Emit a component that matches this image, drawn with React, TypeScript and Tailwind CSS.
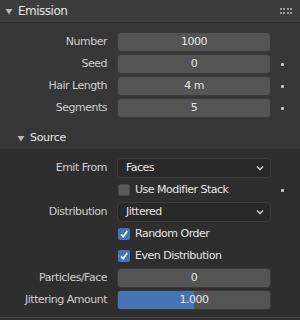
import { ReactNode } from 'react';

const font = { fontFamily: '"DejaVu Sans", "Liberation Sans", sans-serif' };

function Dot() {
  return (
    <div className="w-[22px] flex justify-center">
      <div className="w-[3px] h-[3px] bg-[#c8c8c8] rounded-[1px]" />
    </div>
  );
}

function Row({ label, children, dot }: { label?: string; children: ReactNode; dot?: boolean }) {
  return (
    <div className="flex items-center h-[20px]">
      <div className="w-[107px] text-right text-[11px] tracking-[-0.5px] text-[#d0d0d0] whitespace-nowrap">{label}</div>
      <div className="ml-[10px] w-[154px] h-full">{children}</div>
      {dot ? <Dot /> : <div className="w-[22px]" />}
    </div>
  );
}

function NumField({ value }: { value: string }) {
  return (
    <div className="h-full rounded-[4px] bg-[#545454] border border-[#3a3a3a] flex items-center justify-center text-[11px] tracking-[-0.5px] text-[#e6e6e6]">
      {value}
    </div>
  );
}

function Dropdown({ value }: { value: string }) {
  return (
    <div className="h-full rounded-[4px] bg-[#282828] border border-[#3d3d3d] flex items-center justify-between pl-[8px] pr-[6px] text-[11px] tracking-[-0.5px] text-[#e6e6e6]">
      <span>{value}</span>
      <svg width="8" height="6" viewBox="0 0 8 6">
        <path d="M1 1.5 L4 4.5 L7 1.5" fill="none" stroke="#d8d8d8" strokeWidth="1.3" />
      </svg>
    </div>
  );
}

function Check({ label, checked }: { label: string; checked: boolean }) {
  return (
    <div className="h-full flex items-center gap-[5px] text-[11px] tracking-[-0.5px] text-[#e6e6e6]">
      <div
        className={`w-[12px] h-[12px] ml-[1px] rounded-[2px] flex items-center justify-center ${
          checked ? 'bg-[#4772b3]' : 'bg-[#5a5a5a] border border-[#444]'
        }`}
      >
        {checked && (
          <svg width="10" height="10" viewBox="0 0 10 10">
            <path d="M2 5.2 L4.2 7.6 L8.3 2" fill="none" stroke="#ffffff" strokeWidth="1.7" />
          </svg>
        )}
      </div>
      <span>{label}</span>
    </div>
  );
}

function Slider({ value, fraction }: { value: string; fraction: number }) {
  return (
    <div className="relative h-full rounded-[4px] bg-[#545454] border border-[#3a3a3a] overflow-hidden">
      <div className="h-full bg-[#4772b3]" style={{ width: `${fraction * 100}%` }} />
      <div className="absolute inset-0 flex items-center justify-center text-[11px] tracking-[-0.5px] text-[#e6e6e6]">{value}</div>
    </div>
  );
}

function Triangle() {
  return (
    <svg width="8" height="7" viewBox="0 0 8 7">
      <path d="M0.5 1 L7.5 1 L4 6.5 Z" fill="#b8b8b8" />
    </svg>
  );
}

export default function App() {
  return (
    <div className="w-[300px] h-[320px] bg-[#303030] overflow-hidden" style={font}>
      <div className="h-[23px] bg-[#3d3d3d] flex items-center pl-[5px] pr-[8px] border-b border-[#2f2f2f]">
        <Triangle />
        <span className="ml-[5px] text-[12px] tracking-[-0.5px] text-[#e6e6e6]">Emission</span>
        <div className="ml-auto grid grid-cols-4 gap-x-[1.5px] gap-y-[2px]">
          {Array.from({ length: 8 }).map((_, i) => (
            <div key={i} className="w-[2px] h-[2px] bg-[#9a9a9a]" />
          ))}
        </div>
      </div>

      <div className="bg-[#363636] pt-[9px] flex flex-col gap-[2px]">
        <Row label="Number"><NumField value="1000" /></Row>
        <Row label="Seed" dot><NumField value="0" /></Row>
        <Row label="Hair Length" dot><NumField value="4 m" /></Row>
        <Row label="Segments" dot><NumField value="5" /></Row>
        <div className="h-[29px] flex items-center pt-[8px] pl-[17px]">
          <Triangle />
          <span className="ml-[5px] text-[11px] tracking-[-0.3px] text-[#e6e6e6]">Source</span>
        </div>
      </div>

      <div className="bg-[#2e2e2e] pt-[9px] pb-[7px] flex flex-col gap-[2px] border-b border-[#454545]">
        <Row label="Emit From"><Dropdown value="Faces" /></Row>
        <Row dot><Check label="Use Modifier Stack" checked={false} /></Row>
        <Row label="Distribution"><Dropdown value="Jittered" /></Row>
        <Row><Check label="Random Order" checked /></Row>
        <Row><Check label="Even Distribution" checked /></Row>
        <Row label="Particles/Face"><NumField value="0" /></Row>
        <Row label="Jittering Amount"><Slider value="1.000" fraction={0.5} /></Row>
      </div>
    </div>
  );
}
